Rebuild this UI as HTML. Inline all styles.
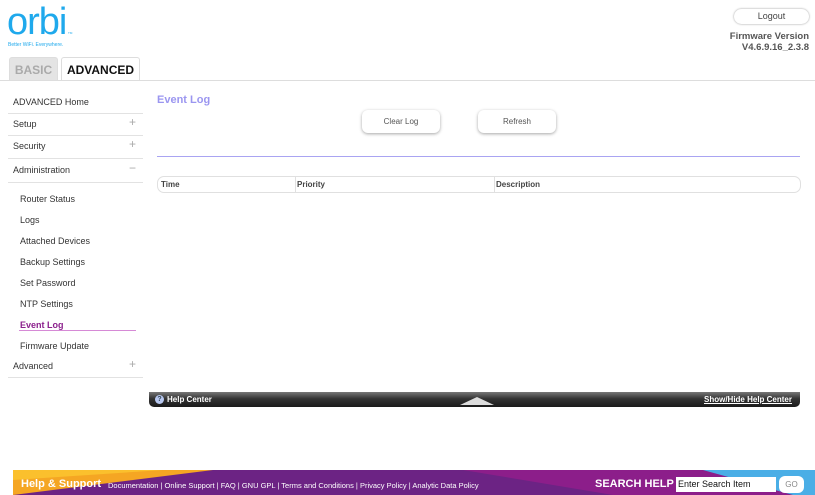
<!DOCTYPE html>
<html><head><style>
*{margin:0;padding:0;box-sizing:border-box}
body{width:815px;height:495px;position:relative;background:#fff;font-family:"Liberation Sans",sans-serif;overflow:hidden;color:#333}
.a{position:absolute}
.nav{position:absolute;left:13px;font-size:9px;color:#333}
.ln{position:absolute;left:8px;width:135px;height:1px;background:#e2e2e2}
.pl{position:absolute;left:129px;font-size:12px;color:#aaa;font-weight:300}
.sub{position:absolute;left:20px;font-size:9px;color:#333}
.btn{position:absolute;top:110px;width:78px;height:23px;border-radius:6px;background:#fff;box-shadow:0 1px 3px rgba(0,0,0,.35);font-size:8px;color:#555;text-align:center;line-height:23px}
</style></head><body>
<div class="a" style="left:7px;top:1px;font-size:38px;color:#1fa9ec;letter-spacing:-1px;font-family:'Liberation Sans',sans-serif">orbi</div>
<div class="a" style="left:68px;top:31px;font-size:3px;color:#1fa9ec">TM</div>
<div class="a" style="left:8px;top:42px;font-size:5px;color:#1fa9ec">Better WiFi. Everywhere.</div>
<div class="a" style="left:9px;top:57px;width:49px;height:24px;background:#e4e4e4;border:1px solid #ddd;border-bottom:none;border-radius:3px 3px 0 0;font-size:12px;font-weight:bold;color:#aaa;text-align:center;line-height:24px">BASIC</div>
<div class="a" style="left:61px;top:57px;width:79px;height:24px;background:#fff;border:1px solid #ddd;border-bottom:none;border-radius:3px 3px 0 0;font-size:12px;font-weight:bold;color:#111;text-align:center;line-height:24px">ADVANCED</div>
<div class="a" style="left:0;top:80px;width:815px;height:1px;background:#ddd"></div>
<div class="a" style="left:734px;top:9px;width:75px;height:15px;border-radius:8px;box-shadow:0 0 2px rgba(0,0,0,.4);font-size:9px;text-align:center;line-height:15px;color:#444">Logout</div>
<div class="a" style="right:6px;top:31px;font-size:9.5px;font-weight:bold;color:#555;text-align:right;line-height:11px">Firmware Version<br>V4.6.9.16_2.3.8</div>

<div class="nav" style="top:97px">ADVANCED Home</div><div class="ln" style="top:113px"></div>
<div class="nav" style="top:119px">Setup</div><div class="pl" style="top:115px">+</div><div class="ln" style="top:135px"></div>
<div class="nav" style="top:141px">Security</div><div class="pl" style="top:137px">+</div><div class="ln" style="top:158px"></div>
<div class="nav" style="top:165px">Administration</div><div class="pl" style="top:161px">−</div><div class="ln" style="top:182px"></div>
<div class="sub" style="top:194px">Router Status</div>
<div class="sub" style="top:215px">Logs</div>
<div class="sub" style="top:236px">Attached Devices</div>
<div class="sub" style="top:257px">Backup Settings</div>
<div class="sub" style="top:278px">Set Password</div>
<div class="sub" style="top:299px">NTP Settings</div>
<div class="sub" style="top:320px;color:#8b1f8c;font-weight:bold">Event Log</div>
<div class="a" style="left:19px;top:330px;width:117px;height:1px;background:#d68ad6"></div>
<div class="sub" style="top:341px">Firmware Update</div>
<div class="nav" style="top:361px">Advanced</div><div class="pl" style="top:357px">+</div><div class="ln" style="top:377px"></div>

<div class="a" style="left:157px;top:94px;font-size:11px;font-weight:bold;color:#9b96f0">Event Log</div>
<div class="btn" style="left:362px">Clear Log</div>
<div class="btn" style="left:478px">Refresh</div>
<div class="a" style="left:157px;top:156px;width:643px;height:1px;background:#a9a4f2"></div>
<div class="a" style="left:157px;top:176px;width:644px;height:17px;border:1px solid #e0e0e0;border-radius:7px;font-size:8px;font-weight:bold;color:#444;line-height:15px">
<span class="a" style="left:3px">Time</span><span class="a" style="left:137px;height:15px;border-left:1px solid #e0e0e0;padding-left:1px">Priority</span><span class="a" style="left:336px;height:15px;border-left:1px solid #e0e0e0;padding-left:1px">Description</span></div>

<div class="a" style="left:149px;top:392px;width:651px;height:15px;border-radius:0 0 5px 5px;background:linear-gradient(#777,#333 45%,#1a1a1a);color:#fff;font-size:8px;font-weight:bold;line-height:15px">
<span class="a" style="left:6px;top:3px;width:9px;height:9px;border-radius:50%;background:#b8c8f0;color:#345;font-size:7px;line-height:9px;text-align:center">?</span>
<span class="a" style="left:18px">Help Center</span>
<span class="a" style="left:311px;top:5px;width:0;height:0;border-left:17px solid transparent;border-right:17px solid transparent;border-bottom:8px solid #ddd"></span>
<span class="a" style="right:8px;text-decoration:underline">Show/Hide Help Center</span></div>

<svg class="a" style="left:13px;top:470px" width="802" height="25"><rect width="802" height="25" fill="#6c2384"/><polygon points="0,0 200,0 0,25" fill="#f5a623"/><polygon points="0,0 150,0 0,10" fill="#fbc02d"/><polygon points="450,0 700,0 780,25 600,25" fill="#8c1e8a"/><polygon points="690,0 802,0 802,25 780,25" fill="#4aaee6"/></svg>
<div class="a" style="left:21px;top:478px;font-size:11px;font-weight:bold;color:#fff">Help &amp; Support</div>
<div class="a" style="left:108px;top:481px;font-size:7.5px;color:#fff;white-space:nowrap">Documentation | Online Support | FAQ | GNU GPL | Terms and Conditions | Privacy Policy | Analytic Data Policy</div>
<div class="a" style="left:595px;top:478px;font-size:11px;font-weight:bold;color:#fff">SEARCH HELP</div>
<div class="a" style="left:676px;top:477px;width:100px;height:15px;background:#fff;font-size:9px;color:#111;padding-left:2px;line-height:15px">Enter Search Item</div>
<div class="a" style="left:779px;top:476px;width:25px;height:17px;background:#fff;border-radius:6px;font-size:8px;color:#888;text-align:center;line-height:17px">GO</div>
</body></html>
